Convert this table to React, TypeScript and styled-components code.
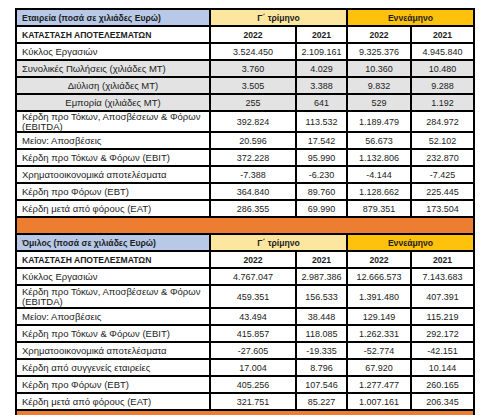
import { FC } from "react";
import styled, { createGlobalStyle } from "styled-components";

const GlobalStyle = createGlobalStyle`
    html, body {
        margin: 0;
        padding: 0;
        background: #ffffff;
        font-family: "Liberation Sans", Arial, sans-serif;
        color: #1c1c1c;
    }
`;

const Page = styled.div`
    padding: 8px 0 0 15px;
    height: 415px;
    overflow: hidden;
    box-sizing: border-box;
`;

const Sheet = styled.div`
    display: grid;
    grid-template-columns: 192px 84px 49px 62px 61px;
    gap: 2px;
    padding: 2px;
    width: max-content;
    background: #000000;
`;

type Tone = "white" | "grey" | "blue" | "cream" | "gold";

const tones: Record<Tone, string> = {
    white: "#ffffff",
    grey: "#e3e3e3",
    blue: "#b7c9e6",
    cream: "#fde6a0",
    gold: "#fec10c",
};

const Cell = styled.div<{
    $tone?: Tone;
    $center?: boolean;
    $bold?: boolean;
    $span?: number;
    $tall?: number;
}>`
    display: flex;
    align-items: center;
    justify-content: ${({ $center }) => ($center ? "center" : "flex-start")};
    text-align: ${({ $center }) => ($center ? "center" : "left")};
    grid-column: span ${({ $span }) => $span ?? 1};
    height: ${({ $tall }) => $tall ?? 15}px;
    padding: ${({ $center }) => ($center ? "0" : "0 4px 0 5px")};
    box-sizing: border-box;
    background: ${({ $tone }) => tones[$tone ?? "white"]};
    font-size: ${({ $bold }) => ($bold ? "8.6px" : "9.5px")};
    font-weight: ${({ $bold }) => ($bold ? 700 : 400)};
    line-height: 10px;
    white-space: nowrap;
    overflow: hidden;
`;

const Wrap = styled.span`
    white-space: normal;
`;

const NumberCell = styled(Cell)`
    font-size: 9px;
`;

const Band = styled.div`
    grid-column: 1 / -1;
    height: 15px;
    background: #ed7d31;
`;

type RowData = {
    label: string;
    values: string[];
    grey?: boolean;
    center?: boolean;
    tall?: number;
};

const company: RowData[] = [
    { label: "Κύκλος Εργασιών", values: ["3.524.450", "2.109.161", "9.325.376", "4.945.840"] },
    {
        label: "Συνολικές Πωλήσεις (χιλιάδες ΜΤ)",
        values: ["3.760", "4.029", "10.360", "10.480"],
        grey: true,
    },
    {
        label: "Διύλιση (χιλιάδες ΜΤ)",
        values: ["3.505", "3.388", "9.832", "9.288"],
        grey: true,
        center: true,
    },
    {
        label: "Εμπορία (χιλιάδες ΜΤ)",
        values: ["255", "641", "529", "1.192"],
        grey: true,
        center: true,
    },
    {
        label: "Κέρδη προ Τόκων, Αποσβέσεων & Φόρων (EBITDA)",
        values: ["392.824", "113.532", "1.189.479", "284.972"],
        tall: 19,
    },
    { label: "Μείον: Αποσβέσεις", values: ["20.596", "17.542", "56.673", "52.102"] },
    { label: "Κέρδη προ Τόκων & Φόρων (EBIT)", values: ["372.228", "95.990", "1.132.806", "232.870"] },
    { label: "Χρηματοοικονομικά αποτελέσματα", values: ["-7.388", "-6.230", "-4.144", "-7.425"] },
    { label: "Κέρδη προ Φόρων (EBT)", values: ["364.840", "89.760", "1.128.662", "225.445"] },
    { label: "Κέρδη μετά από φόρους (EAT)", values: ["286.355", "69.990", "879.351", "173.504"] },
];

const group: RowData[] = [
    { label: "Κύκλος Εργασιών", values: ["4.767.047", "2.987.386", "12.666.573", "7.143.683"] },
    {
        label: "Κέρδη προ Τόκων, Αποσβέσεων & Φόρων (EBITDA)",
        values: ["459.351", "156.533", "1.391.480", "407.391"],
        tall: 21,
    },
    { label: "Μείον: Αποσβέσεις", values: ["43.494", "38.448", "129.149", "115.219"] },
    { label: "Κέρδη προ Τόκων & Φόρων (EBIT)", values: ["415.857", "118.085", "1.262.331", "292.172"] },
    { label: "Χρηματοοικονομικά αποτελέσματα", values: ["-27.605", "-19.335", "-52.774", "-42.151"] },
    { label: "Κέρδη από συγγενείς εταιρείες", values: ["17.004", "8.796", "67.920", "10.144"] },
    { label: "Κέρδη προ Φόρων (EBT)", values: ["405.256", "107.546", "1.277.477", "260.165"] },
    { label: "Κέρδη μετά από φόρους (EAT)", values: ["321.751", "85.227", "1.007.161", "206.345"] },
];

const years = ["2022", "2021", "2022", "2021"];

const DataRow: FC<{ row: RowData }> = ({ row }) => {
    const tone: Tone = row.grey ? "grey" : "white";
    return (
        <>
            <Cell $tone={tone} $center={row.center} $tall={row.tall}>
                {row.tall ? <Wrap>{row.label}</Wrap> : row.label}
            </Cell>
            {row.values.map((v, i) => (
                <NumberCell key={i} $tone={tone} $center $tall={row.tall}>
                    {v}
                </NumberCell>
            ))}
        </>
    );
};

const Section: FC<{ title: string; rows: RowData[] }> = ({ title, rows }) => (
    <>
        <Cell $tone="blue" $bold>
            {title}
        </Cell>
        <Cell $tone="cream" $bold $center $span={2}>
            Γ΄ τρίμηνο
        </Cell>
        <Cell $tone="gold" $bold $center $span={2}>
            Εννεάμηνο
        </Cell>
        <Cell $bold>ΚΑΤΑΣΤΑΣΗ ΑΠΟΤΕΛΕΣΜΑΤΩΝ</Cell>
        {years.map((y, i) => (
            <Cell key={i} $bold $center>
                {y}
            </Cell>
        ))}
        {rows.map((row) => (
            <DataRow key={row.label} row={row} />
        ))}
    </>
);

const App: FC = () => {
    return (
        <Page>
            <GlobalStyle />
            <Sheet>
                <Section title="Εταιρεία (ποσά σε χιλιάδες Ευρώ)" rows={company} />
                <Band />
                <Section title="Όμιλος (ποσά σε χιλιάδες Ευρώ)" rows={group} />
                <Band />
            </Sheet>
        </Page>
    );
};

export default App;
